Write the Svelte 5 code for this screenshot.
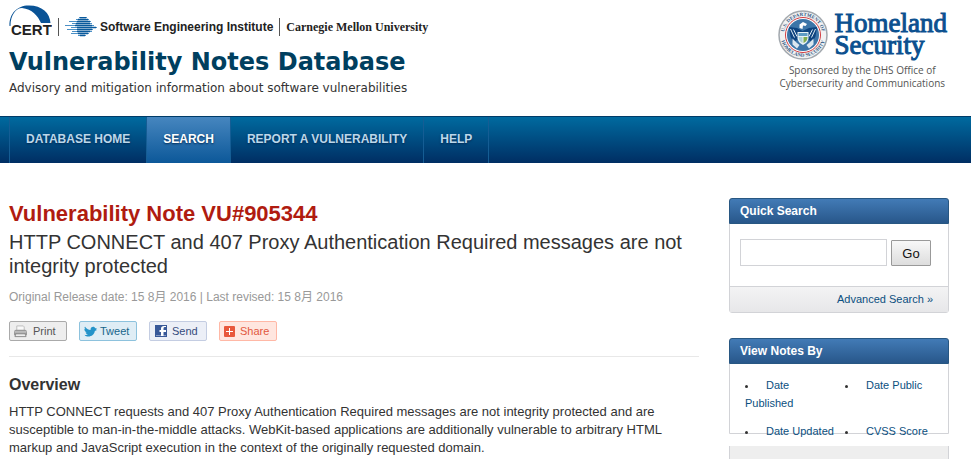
<script>
  const nav = ['DATABASE HOME', 'SEARCH', 'REPORT A VULNERABILITY', 'HELP'];
  const current = 'SEARCH';
  const notes = ['Date Published', 'Date Public', 'Date Updated', 'CVSS Score'];
  const stripes = [
    [14, 22], [11, 24], [4, 26], [7, 27], [0, 29],
    [6, 32], [2, 28], [7, 27], [6, 24], [13, 21]
  ];
</script>

<div class="page">
  <header>
    <div class="brand">
      <div class="logos">
        <svg class="cert" viewBox="0 0 43 32" role="img" aria-label="CERT">
          <path d="M.5 21C0 8 9 .2 20 .5 33 .5 41 8 41.500 18H32C29 11 23 4 13 3 7 3 1.500 10 1.500 21Z" fill="#0a5396" />
          <text x="2" y="30" class="cert-text">CERT</text>
        </svg>
        <span class="rule"></span>
        <svg class="sei" viewBox="0 0 32 20" aria-hidden="true">
          {#each stripes as [x, right], i}
            <path d="M{x} {i * 2 + 0.5}H{right}" stroke="#4b90c6" />
          {/each}
          <path d="M15 .5H21M13 2.500H23M12 4.500H25M11 6.500H25M10 8.500H27M12 10.500H31M12 12.500H27M12 14.500H25M13 16.500H23M15 18.500H20" stroke="#0a5a9c" stroke-width="1.400" />
        </svg>
        <span class="institute">Software Engineering Institute</span>
        <span class="rule"></span>
        <span class="university">Carnegie Mellon University</span>
      </div>
      <h1>Vulnerability Notes Database</h1>
      <p>Advisory and mitigation information about software vulnerabilities</p>
    </div>
    <div class="dhs">
      <div class="dhs-row">
        <svg class="seal" viewBox="0 0 100 100" role="img" aria-label="U.S. Department of Homeland Security seal">
          <defs>
            <path id="top-arc" d="M12 57A38.500 38.500 0 1 1 88 57" />
            <path id="low-arc" d="M5 57A46 46 0 0 0 95 57" />
          </defs>
          <circle cx="50" cy="50" r="48" fill="#f1f2f3" stroke="#a2a8ae" stroke-width="3" />
          <circle cx="50" cy="50" r="35" fill="#fff" stroke="#d13c40" stroke-width="2" />
          <circle cx="50" cy="50" r="32" fill="#3c75a8" />
          <text class="seal-text"><textPath href="#top-arc" startOffset="50%" text-anchor="middle">U.S. DEPARTMENT OF</textPath></text>
          <text class="seal-text"><textPath href="#low-arc" startOffset="50%" text-anchor="middle">HOMELAND SECURITY</textPath></text>
          <path d="M22 34L38 36 49 42 62 36 78 34 75 53 68 65 60 58H40L31 65 25 53Z" fill="#0d4480" />
          <path d="M43 29L50 24 58 28 55 32 50 31 49 38 43 36Z" fill="#fff" />
          <path d="M25 38L33 55M31 39L38 53M75 38L67 55M69 39L62 53" stroke="#dceaf2" stroke-width="2" />
          <path d="M39 44H61V57Q59 66 50 70 41 66 39 57Z" fill="#e8f2f5" />
          <path d="M41 46H59V52H41Z" fill="#5d9cc4" />
          <path d="M41 54H49V66Q42 63 41 54Z" fill="#a8d0d8" />
          <path d="M51 54H59Q59 63 51 66Z" fill="#7fac50" />
          <path d="M29 57L38 66 43 70 38 77 29 69ZM71 57L62 66 57 70 62 77 71 69Z" fill="#dbe7ef" />
        </svg>
        <div class="homeland">Homeland<br />Security</div>
      </div>
      <p class="sponsor">Sponsored by the DHS Office of<br />Cybersecurity and Communications</p>
    </div>
  </header>

  <nav aria-label="Main">
    <ul>
      {#each nav as item}
        <li><a href="#main" class:active={item === current}>{item}</a></li>
      {/each}
    </ul>
  </nav>

  <div class="content">
    <main id="main">
      <h2>Vulnerability Note VU#905344</h2>
      <p class="headline">HTTP CONNECT and 407 Proxy Authentication Required messages are not integrity protected</p>
      <p class="dates">Original Release date: 15 8月 2016 | Last revised: 15 8月 2016</p>
      <div class="actions">
        <button class="print">
          <svg viewBox="0 0 14 14" aria-hidden="true">
            <path d="M3 6V1H10L11 2V6" fill="#f9f9f9" stroke="#bbb" />
            <path d="M0 8Q0 5 2 5H12Q14 5 14 8V11H0Z" fill="#999" />
            <path d="M1 7.500H13" stroke="#ddd" />
            <path d="M2 9.500H12L13 12.500H1Z" fill="#eee" stroke="#888" />
          </svg>Print</button>
        <button class="tweet">
          <svg viewBox="0 0 24 20" aria-hidden="true">
            <path d="M24 7L20 9C19 16 13 20 6 19 4 19 2 18 1 16 4 17 6 16 7 15 4 15 3 13 3 12H5C2 10 0 8 1 5L3 6C0 3 1 1 2 1 5 5 9 7 12 7 12 3 14 1 17 1 19 1 20 2 21 4L24 4 22 6Z" fill="#2493c9" />
          </svg>Tweet</button>
        <button class="send">
          <svg viewBox="0 0 12 12" aria-hidden="true">
            <path d="M0 0H12V12H0Z" fill="#385898" />
            <path d="M1 10.500H11" stroke="#8799c2" />
            <path d="M11 2H9.500Q8.500 2 8.500 3.500V5H11V7H8.500V11H6V7H4.500V5H6V3.500Q6 1 9 1H11Z" fill="#fff" />
          </svg>Send</button>
        <button class="share">
          <svg viewBox="0 0 11 11" aria-hidden="true">
            <rect width="11" height="11" rx="1" fill="#e8583c" />
            <path d="M5.500 2V9M2 5.500H9" stroke="#fff" />
          </svg>Share</button>
      </div>
      <section>
        <h3>Overview</h3>
        <p>HTTP CONNECT requests and 407 Proxy Authentication Required messages are not integrity protected and are susceptible to man-in-the-middle attacks. WebKit-based applications are additionally vulnerable to arbitrary HTML markup and JavaScript execution in the context of the originally requested domain.</p>
      </section>
    </main>

    <aside>
      <section class="panel">
        <h4>Quick Search</h4>
        <form onsubmit={(e) => e.preventDefault()}>
          <input type="text" aria-label="Quick Search" />
          <button>Go</button>
        </form>
        <footer><a href="#main">Advanced Search »</a></footer>
      </section>
      <section class="panel notes">
        <h4>View Notes By</h4>
        <ul>
          {#each notes as note}
            <li><a href="#main">{note}</a></li>
          {/each}
        </ul>
      </section>
      <div class="more"></div>
    </aside>
  </div>
</div>

<style>
  :global(body) { margin: 0; background: #fff; }
  .page { font-family: "Liberation Sans", Arial, "Noto Sans CJK JP", sans-serif; color: #333; font-size: 13px; }
  h1, h2, h3, h4, p, ul { margin: 0; padding: 0; }
  a { color: #0b4f80; text-decoration: none; }
  button { font-family: inherit; }

  header { display: flex; justify-content: space-between; height: 116px; padding: 0 24px 0 9px; box-sizing: border-box; }
  .logos { display: flex; align-items: flex-end; height: 44px; padding-bottom: 7px; box-sizing: border-box; white-space: nowrap; line-height: 20px; }
  .cert { width: 43px; height: 32px; }
  .cert-text { font: bold 15px "Liberation Sans", Arial, sans-serif; fill: #222; stroke: #fff; stroke-width: 1px; paint-order: stroke; }
  .rule { width: 1px; height: 18px; background: #555; margin: 0 6px 1px; }
  .sei { width: 32px; height: 20px; }
  .institute { margin-left: 3px; font-size: 12px; font-weight: bold; color: #222; }
  .university { font: bold 12px/20px "Liberation Serif", "Times New Roman", serif; color: #222; }
  h1 { font: bold 24px/36px "DejaVu Sans", Verdana, sans-serif; color: #003f5f; }
  .brand p { font: 12px/16px "DejaVu Sans", Verdana, sans-serif; }
  .dhs { padding-top: 10px; }
  .dhs-row { display: flex; gap: 7px; }
  .seal { width: 50px; height: 50px; }
  .seal-text { font: bold 10px "Liberation Serif", serif; fill: #315a85; }
  .homeland { font: 27px/22px "Liberation Serif", "Times New Roman", serif; color: #0b508f; -webkit-text-stroke: 1px #0b508f; padding-top: 2px; }
  .sponsor { font: 10px/13px "Open Sans", sans-serif; color: #555; text-align: center; padding-top: 4px; }

  nav { height: 47px; box-sizing: border-box; border-top: 1px solid #003b68; background: linear-gradient(#006a9f, #002e63); padding-left: 9px; }
  nav ul { display: flex; height: 100%; list-style: none; border-left: 1px solid #155d94; }
  nav li { border-right: 1px solid #155d94; }
  nav a { display: flex; align-items: center; height: 100%; padding: 0 16px 2px; box-sizing: border-box; font-size: 12px; font-weight: bold; color: #bcd7ea; white-space: nowrap; text-shadow: 0 1px 2px #002b55; }
  nav a.active { background: linear-gradient(#4686bf, #0c5899); color: #fff; }

  .content { display: flex; gap: 30px; padding: 35px 22px 0 9px; }
  main { flex: 1; min-width: 0; }
  h2 { font-size: 22px; line-height: 32px; color: #b01c10; }
  .headline { font-size: 20px; line-height: 24px; }
  .dates { font-size: 12px; line-height: 18px; color: #999; margin-top: 10px; }
  .actions { display: flex; gap: 12px; margin-top: 15px; padding-bottom: 15px; border-bottom: 1px solid #e8e8e8; }
  .actions button { display: flex; align-items: center; width: 58px; height: 20px; padding: 0 4px; border: 1px solid; border-radius: 2px; font-size: 11px; white-space: nowrap; gap: 6px; }
  .actions svg { width: 13px; height: 13px; flex: none; }
  .actions .print { background: #eee; border-color: #aaa; color: #555; }
  .actions .tweet { background: #dfedf5; border-color: #8dc2dd; color: #17658b; gap: 3px; }
  .tweet svg { height: 11px; }
  .actions .send { background: #eceff7; border-color: #c4cde2; color: #344b7d; gap: 5px; padding-left: 5px; }
  .send svg { width: 12px; height: 12px; }
  .actions .share { background: #ffe6df; border-color: #ffb8a6; color: #e2583e; gap: 5px; }
  .share svg { width: 11px; height: 11px; }
  h3 { font-size: 16px; line-height: 20px; margin-top: 18px; }
  main section p { line-height: 18px; margin-top: 8px; }

  aside { width: 220px; flex: none; }
  .panel { border: 1px solid #d2d3d7; border-radius: 3px; margin-bottom: 25px; }
  h4 { margin: -1px -1px 0; padding: 0 10px; border: 1px solid #285782; border-radius: 3px 3px 0 0; background: linear-gradient(#427bb6, #28578a); color: #fff; font-size: 12px; line-height: 24px; }
  form { display: flex; align-items: flex-end; gap: 4px; padding: 15px 17px 20px 10px; }
  input { flex: 1; min-width: 0; height: 27px; box-sizing: border-box; border: 1px solid #d2d3d7; border-radius: 0; }
  form button { width: 40px; height: 26px; border: 1px solid #999; border-radius: 1px; background: linear-gradient(#f8f8f8, #ddd); color: #111; font-size: 13px; padding: 0; }
  .panel footer { border-top: 1px solid #d2d3d7; background: linear-gradient(#f3f3f4, #e7e7e9); text-align: right; font-size: 11px; line-height: 25px; padding-right: 15px; }
  .panel.notes { height: 94px; margin-bottom: 12px; border-radius: 3px 3px 0 0; }
  .notes ul { display: grid; grid-template-columns: 100px 1fr; row-gap: 10px; padding: 12px 0 0 15px; list-style-position: inside; font-size: 11px; line-height: 18px; }
  .notes li { padding-right: 8px; }
  .notes li::marker { color: #333; }
  .notes li::before { content: ""; display: inline-block; width: 6px; }
  .more { height: 13px; border: solid #d2d3d7; border-width: 0 1px; background: #eee; box-sizing: border-box; }
</style>
